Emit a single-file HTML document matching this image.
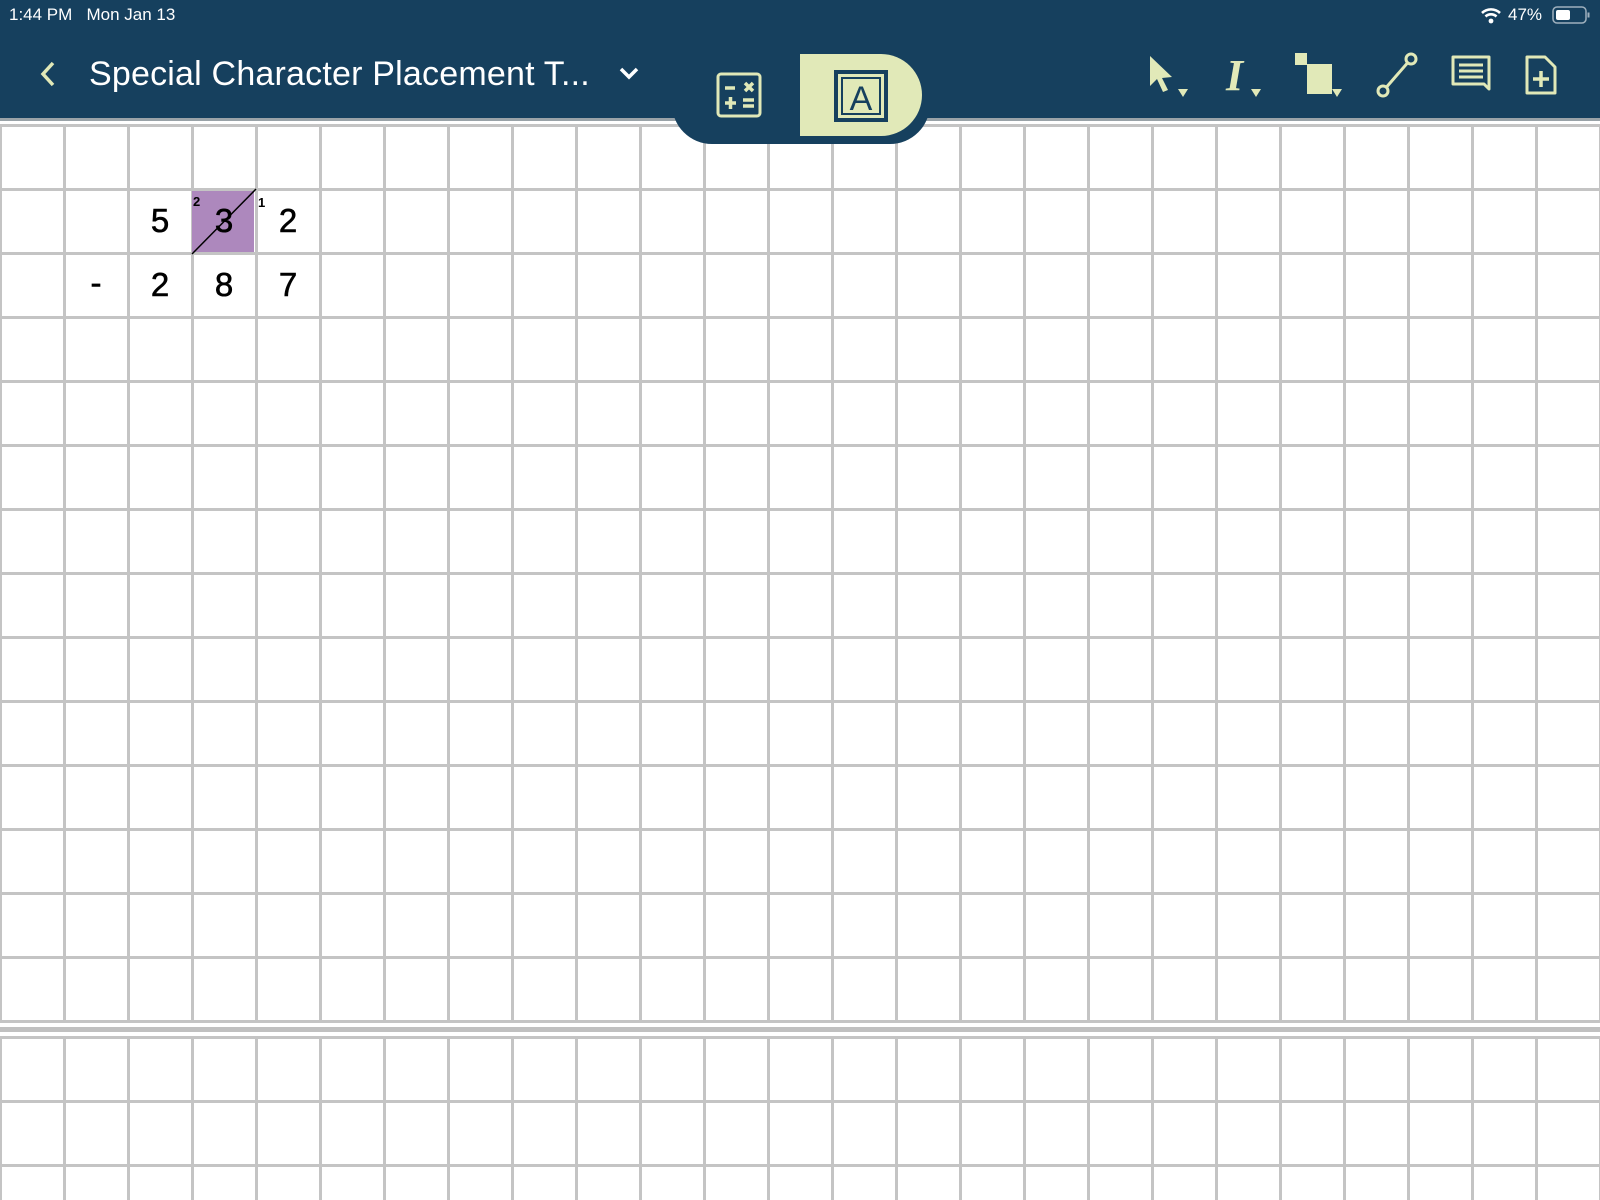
<!DOCTYPE html>
<html><head><meta charset="utf-8"><style>
*{margin:0;padding:0;box-sizing:border-box}
body{width:1600px;height:1200px;overflow:hidden;background:#fff;font-family:"Liberation Sans",sans-serif;position:relative}
.hdr{position:absolute;left:0;top:0;width:1600px;height:121px;background:#16405e;border-bottom:3px solid #9aa3a8}
.grid{position:absolute;left:0;width:1600px;
background-image:linear-gradient(to right,#c4c4c4 0,#c4c4c4 3px,transparent 3px),linear-gradient(to bottom,#c4c4c4 0,#c4c4c4 3px,transparent 3px);
background-size:64px 64px;background-position:-1px 0,0 0}
.t{position:absolute;color:#fff}
.d{position:absolute;font-size:33px;color:#000;width:64px;text-align:center;-webkit-text-stroke:0.6px #000}
.ic{position:absolute}
</style></head><body>
<div class="grid" style="top:124px;height:899px"></div>
<div style="position:absolute;left:0;top:1027px;width:1600px;height:5px;background:#c0c0c0"></div>
<div class="grid" style="top:1036px;height:164px"></div>
<div style="position:absolute;left:192px;top:191px;width:62px;height:61px;background:#ad88bd"></div>
<svg class="ic" style="left:190px;top:188px" width="68" height="68"><line x1="2" y1="66" x2="66" y2="1" stroke="#000" stroke-width="1.5"/></svg>
<div class="d" style="left:128px;top:202px">5</div>
<div class="d" style="left:192px;top:202px">3</div>
<div class="d" style="left:256px;top:202px">2</div>
<div style="position:absolute;left:193px;top:194px;font-size:13px;font-weight:bold">2</div>
<div style="position:absolute;left:258px;top:195px;font-size:13px;font-weight:bold">1</div>
<div class="d" style="left:64px;top:264px">-</div>
<div class="d" style="left:128px;top:266px">2</div>
<div class="d" style="left:192px;top:266px">8</div>
<div class="d" style="left:256px;top:266px">7</div>
<div class="hdr"></div>
<div style="position:absolute;left:672px;top:60px;width:258px;height:84px;background:#16405e;border-radius:0 0 40px 40px"></div>
<div style="position:absolute;left:800px;top:54px;width:122px;height:82px;background:#e1e9b8;border-radius:0 41px 41px 0"></div>
<svg class="ic" style="left:834px;top:70px" width="54" height="52"><rect x="2" y="2" width="50" height="48" fill="none" stroke="#16405e" stroke-width="4"/><rect x="8" y="8" width="38" height="36" fill="none" stroke="#16405e" stroke-width="2"/><text x="27" y="40" text-anchor="middle" font-size="34" fill="#16405e" font-family="Liberation Sans">A</text></svg>
<svg class="ic" style="left:716px;top:72px" width="46" height="46"><rect x="2" y="2" width="42" height="42" rx="3" fill="none" stroke="#e1e9b8" stroke-width="3"/><path d="M9 16h10M29 11l8 8M37 11l-8 8M9 31h11M14.5 25v12M27 28h11M27 34h11" stroke="#e1e9b8" stroke-width="3.5"/></svg>
<div class="t" style="left:9px;top:5px;font-size:17px">1:44 PM&nbsp;&nbsp;&nbsp;Mon Jan 13</div>
<div class="t" style="left:1508px;top:5px;font-size:17px">47%</div>
<svg class="ic" style="left:1480px;top:6px" width="22" height="18"><path d="M2 7a13 13 0 0 1 18 0M5.5 10.5a8 8 0 0 1 11 0" stroke="#fff" stroke-width="2.6" fill="none"/><circle cx="11" cy="15" r="2.4" fill="#fff"/></svg>
<svg class="ic" style="left:1552px;top:5px" width="40" height="20"><rect x="1" y="2" width="33" height="16" rx="4" fill="none" stroke="#9fb0bd" stroke-width="1.5"/><rect x="4" y="5" width="14" height="10" rx="2" fill="#fff"/><rect x="35.5" y="7.5" width="2" height="5" fill="#9fb0bd"/></svg>
<svg class="ic" style="left:38px;top:60px" width="20" height="28"><path d="M15 3L5 14l10 11" stroke="#e1e9b8" stroke-width="3.5" fill="none"/></svg>
<div class="t" style="left:89px;top:55px;font-size:34px;letter-spacing:0.2px">Special Character Placement T...</div>
<svg class="ic" style="left:618px;top:66px" width="22" height="16"><path d="M3 3l8 8 8-8" stroke="#fff" stroke-width="3.5" fill="none"/></svg>
<svg class="ic" style="left:1145px;top:52px" width="50" height="50"><path d="M5 4v30l7-7 6 13 5-2-6-12 10-1z" fill="#e1e9b8"/><path d="M33 37h10l-5 8z" fill="#e1e9b8"/></svg>
<svg class="ic" style="left:1222px;top:52px" width="50" height="50"><text x="4" y="38" font-size="44" font-style="italic" font-weight="bold" fill="#e1e9b8" font-family="Liberation Serif">I</text><path d="M29 37h10l-5 8z" fill="#e1e9b8"/></svg>
<svg class="ic" style="left:1292px;top:52px" width="54" height="50"><rect x="3" y="1" width="12" height="12" fill="#e1e9b8"/><rect x="15" y="12" width="25" height="30" fill="#e1e9b8"/><path d="M40 37h10l-5 8z" fill="#e1e9b8"/></svg>
<svg class="ic" style="left:1374px;top:50px" width="46" height="50"><line x1="10" y1="40" x2="36" y2="10" stroke="#e1e9b8" stroke-width="3"/><circle cx="9" cy="41" r="5" fill="#16405e" stroke="#e1e9b8" stroke-width="3"/><circle cx="37" cy="9" r="5" fill="#16405e" stroke="#e1e9b8" stroke-width="3"/></svg>
<svg class="ic" style="left:1450px;top:54px" width="42" height="42"><path d="M3 3h36v32l-5-5H3z" fill="none" stroke="#e1e9b8" stroke-width="3" stroke-linejoin="round"/><path d="M9 11h24M9 17h24M9 23h24" stroke="#e1e9b8" stroke-width="3"/></svg>
<svg class="ic" style="left:1524px;top:54px" width="34" height="42"><path d="M3 3h18l10 10v26H3z" fill="none" stroke="#e1e9b8" stroke-width="3" stroke-linejoin="round"/><path d="M17 17v16M9 25h16" stroke="#e1e9b8" stroke-width="3.5"/></svg>
</body></html>
